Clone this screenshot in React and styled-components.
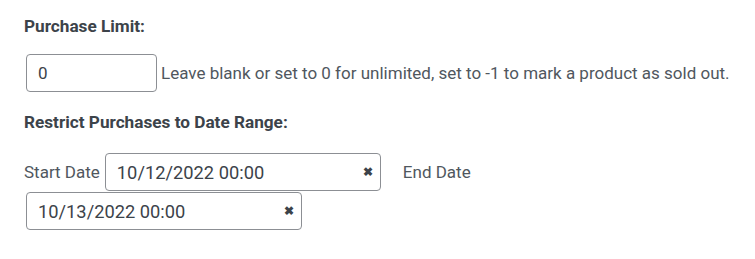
import React from "react";
import styled, { createGlobalStyle } from "styled-components";

const Global = createGlobalStyle`
  html, body { margin: 0; padding: 0; background: #fff; }
  body {
    font-family: Roboto, "Noto Sans", "Liberation Sans", sans-serif;
    color: #3c434a;
    font-size: 17px;
  }
`;

const Page = styled.div`
  width: 755px;
  height: 259px;
  box-sizing: border-box;
  padding: 15px 24px 0 24px;
`;

const Heading = styled.div`
  font-weight: 700;
  font-size: 17.2px;
  line-height: 22px;
  color: #3c434a;
  margin-bottom: ${(p) => p.$mb}px;
`;

const LimitRow = styled.div`
  display: flex;
  align-items: center;
  gap: 4px;
  margin-bottom: 19px;
`;

const TextInput = styled.input`
  box-sizing: border-box;
  width: 131px;
  height: 38px;
  margin: 0 0 0 2px;
  padding: 0 11px;
  border: 1px solid #8c8f94;
  border-radius: 4px;
  font-family: inherit;
  font-size: 17px;
  color: #3c434a;
  background: #fff;
  outline: none;
`;

const Help = styled.span`
  font-size: 17px;
  color: #50575e;
  white-space: nowrap;
`;

const DateRow = styled.div`
  display: flex;
  flex-wrap: wrap;
  align-items: center;
  row-gap: 1px;
  width: 480px;
`;

const FieldLabel = styled.span`
  font-size: 17px;
  color: #50575e;
  margin-left: ${(p) => p.$ml || 0}px;
  margin-right: ${(p) => p.$mr || 0}px;
`;

const DateField = styled.div`
  box-sizing: border-box;
  display: flex;
  align-items: center;
  width: 276px;
  height: 38px;
  margin-left: 2px;
  padding: 0 7px 0 11px;
  border: 1px solid #8c8f94;
  border-radius: 4px;
  background: #fff;
`;

const DateValue = styled.span`
  flex: 1;
  font-size: 18.3px;
  color: #3c434a;
`;

const Clear = styled.span`
  font-size: 12px;
  font-weight: 700;
  color: #3c434a;
  line-height: 1;
`;

export default function App() {
  return (
    <Page>
      <Global />
      <Heading $mb={17}>Purchase Limit:</Heading>
      <LimitRow>
        <TextInput defaultValue="0" />
        <Help>Leave blank or set to 0 for unlimited, set to -1 to mark a product as sold out.</Help>
      </LimitRow>
      <Heading $mb={20}>Restrict Purchases to Date Range:</Heading>
      <DateRow>
        <FieldLabel $mr={3}>Start Date</FieldLabel>
        <DateField>
          <DateValue>10/12/2022 00:00</DateValue>
          <Clear>✖</Clear>
        </DateField>
        <FieldLabel $ml={22}>End Date</FieldLabel>
        <DateField>
          <DateValue>10/13/2022 00:00</DateValue>
          <Clear>✖</Clear>
        </DateField>
      </DateRow>
    </Page>
  );
}
